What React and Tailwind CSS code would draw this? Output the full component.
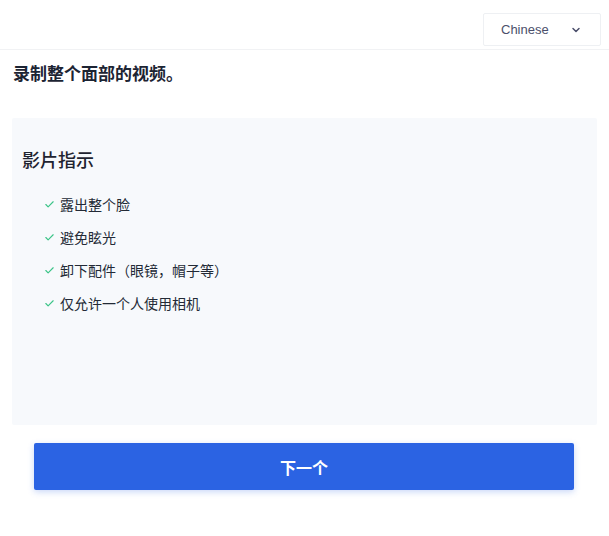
import React from "react";
import { ChevronDown, Check } from "lucide-react";

const tips = ["露出整个脸", "避免眩光", "卸下配件（眼镜，帽子等）", "仅允许一个人使用相机"];

export default function App() {
  return (
    <div
      className="w-[609px] h-[536px] bg-white text-[#1f2937]"
      style={{ fontFamily: '"Noto Sans CJK SC", "Noto Sans", sans-serif' }}
    >
      {/* header */}
      <div className="h-[50px] border-b border-[#f1f2f4] flex justify-end items-start pt-[13px] pr-[8px]">
        <button className="w-[118px] h-[33px] border border-[#eef0f3] rounded-[2px] flex items-center justify-between pl-[17px] pr-[18px] text-[13px] text-[#4b4f6b] bg-white">
          <span style={{ fontFamily: '"Liberation Sans", Arial, sans-serif' }}>Chinese</span>
          <ChevronDown size={12} strokeWidth={3} className="text-[#4b4f6b]" />
        </button>
      </div>

      <h1 className="px-[13px] pt-[10px] text-[17px] font-bold leading-[25px] text-[#1c2433]">录制整个面部的视频。</h1>

      <div className="mx-[12px] mt-[33px] h-[307px] bg-[#f7f9fc] rounded-[2px] px-[10px] pt-[29px]">
        <h2 className="text-[18px] font-medium leading-[25px] text-[#1f2430]">影片指示</h2>
        <ul className="mt-[22px] pl-[22px] flex flex-col gap-[12px]">
          {tips.map((t) => (
            <li key={t} className="flex items-center h-[21px] text-[14px] text-[#232a36]">
              <Check size={11} strokeWidth={2.5} className="text-[#3cc488] mr-[5px]" />
              <span>{t}</span>
            </li>
          ))}
        </ul>
      </div>

      <div className="px-[34px] pt-[18px]">
        <button className="w-[540px] h-[47px] bg-[#2b63e3] rounded-[2px] shadow-[0_2px_6px_rgba(43,99,227,0.25)] text-white text-[16px] font-bold flex items-center justify-center">
          下一个
        </button>
      </div>
    </div>
  );
}
